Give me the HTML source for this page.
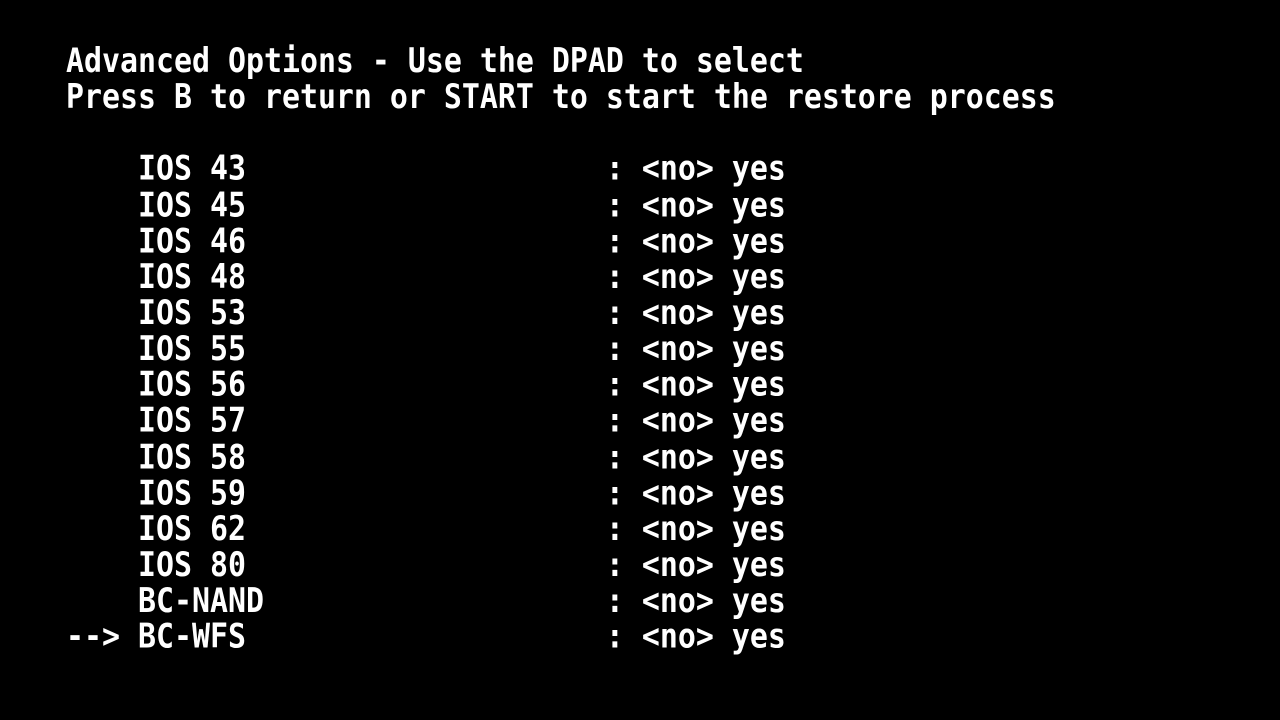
<html><head><style>
body{margin:0;background:#000;width:1280px;height:720px;overflow:hidden}
pre{position:absolute;left:66px;top:44px;margin:0;color:#fff;font:bold 29.9px/32.14px "DejaVu Sans Mono",monospace;transform:scaleY(1.12);transform-origin:0 0;filter:blur(0.3px)}
</style></head><body><pre>Advanced Options - Use the DPAD to select
Press B to return or START to start the restore process

    IOS 43                    : &lt;no&gt; yes
    IOS 45                    : &lt;no&gt; yes
    IOS 46                    : &lt;no&gt; yes
    IOS 48                    : &lt;no&gt; yes
    IOS 53                    : &lt;no&gt; yes
    IOS 55                    : &lt;no&gt; yes
    IOS 56                    : &lt;no&gt; yes
    IOS 57                    : &lt;no&gt; yes
    IOS 58                    : &lt;no&gt; yes
    IOS 59                    : &lt;no&gt; yes
    IOS 62                    : &lt;no&gt; yes
    IOS 80                    : &lt;no&gt; yes
    BC-NAND                   : &lt;no&gt; yes
--> BC-WFS                    : &lt;no&gt; yes</pre></body></html>
